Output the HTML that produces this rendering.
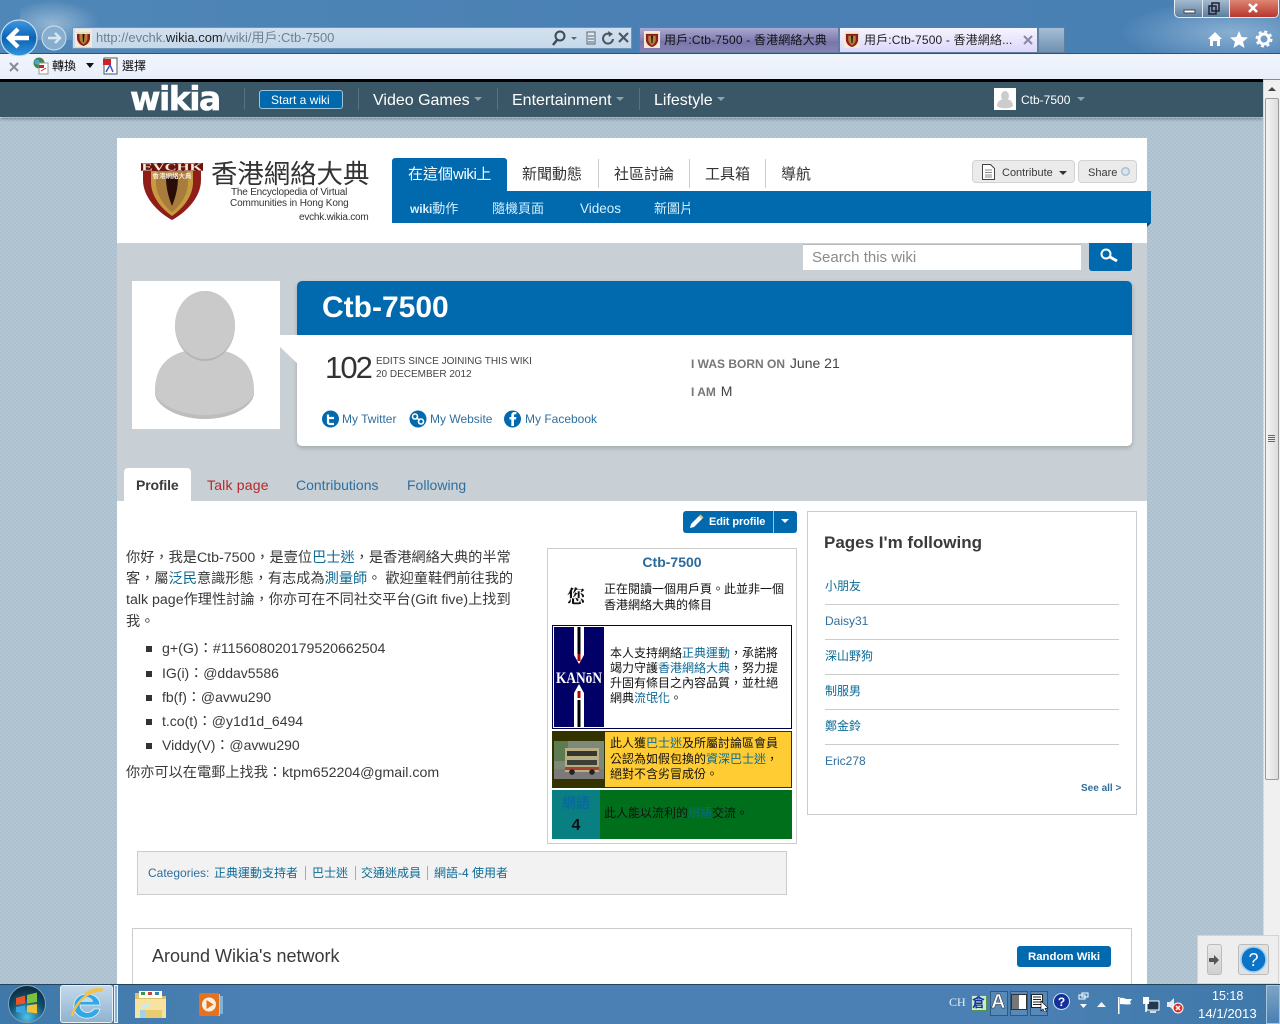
<!DOCTYPE html>
<html lang="zh-Hant"><head><meta charset="utf-8"><title>用戶:Ctb-7500</title>
<style>
html,body{margin:0;padding:0}
body{width:1280px;height:1024px;overflow:hidden;position:relative;background:#fff;font-family:"Liberation Sans","Noto Sans CJK TC",sans-serif;color:#3a3a3a}
.b,.t,svg{position:absolute}
.t{white-space:nowrap;line-height:20px;font-size:14px}
.a14{font-size:14.2px}
a{color:#0b6a96;text-decoration:none}
.s12{font-size:12px}.s13{font-size:13px}
.w{color:#fff}
.chk{background-color:#b6c7d4;background-image:linear-gradient(45deg,#acbfce 25%,transparent 25%,transparent 75%,#acbfce 75%),linear-gradient(45deg,#acbfce 25%,transparent 25%,transparent 75%,#acbfce 75%);background-size:4px 4px;background-position:0 0,2px 2px}
.sep{position:absolute;width:1px}
.li{position:absolute;left:146px;width:6px;height:6px;background:#333}
.hr{position:absolute;left:825px;width:294px;height:1px;background:#ccc}
</style></head><body>

<!-- page background -->
<div class="b chk" style="left:0;top:118px;width:1263px;height:866px"></div>

<!-- browser chrome -->
<div class="b" style="left:0;top:0;width:1280px;height:54px;background:linear-gradient(90deg,#4f87b8 0,#4a80b3 50%,#4980b4 100%)"></div>
<div class="b" style="left:20px;top:0;width:80px;height:40px;background:radial-gradient(ellipse at 40% 60%,rgba(255,255,255,.4),rgba(255,255,255,0) 70%)"></div>
<div class="b" style="left:1120px;top:0;width:160px;height:54px;background:radial-gradient(ellipse at 70% 60%,rgba(190,215,235,.55),rgba(255,255,255,0) 70%)"></div>
<div class="b" style="left:0;top:53px;width:1280px;height:1px;background:#2b5478"></div>
<!-- toolbar -->
<div class="b" style="left:0;top:54px;width:1280px;height:26px;background:linear-gradient(#f0f4fd,#e9effa)"></div>
<div class="b" style="left:0;top:79px;width:1263px;height:3px;background:#000"></div>
<div class="b" style="left:1263px;top:79px;width:17px;height:1px;background:#888"></div>

<!-- back / forward -->
<svg style="left:0;top:18px" width="72" height="38" viewBox="0 0 72 38">
<defs><linearGradient id="bk" x1="0" y1="0" x2="0" y2="1"><stop offset="0" stop-color="#3f9ae0"/><stop offset=".5" stop-color="#0b63b5"/><stop offset="1" stop-color="#2f97dc"/></linearGradient></defs>
<circle cx="54" cy="20" r="12" fill="#88aecf" stroke="#cfe0ef"/>
<path d="M48 20h11M55 15l5 5-5 5" fill="none" stroke="#d9e7f3" stroke-width="2.4"/>
<circle cx="19" cy="20" r="18" fill="url(#bk)" stroke="#c9dcee" stroke-width="1.2"/>
<path d="M10 20h19M18 11l-9 9 9 9" fill="none" stroke="#fff" stroke-width="4.4"/>
</svg>
<!-- address bar -->
<div class="b" style="left:72px;top:27px;width:560px;height:22px;background:linear-gradient(#d3e1ef,#c6d9ea);border:1px solid #6f95b7;box-sizing:border-box"></div>
<svg style="left:75px;top:29px" width="17" height="18" viewBox="0 0 17 18"><rect width="17" height="18" fill="#f4ead8"/><path d="M2 3h13v6c0 4-3 7-6.500 8C5 16 2 13 2 9z" fill="#8d1d18"/><path d="M4.500 5h8v4c0 3-2 5-4 6.500C6.500 14 4.500 12 4.500 9z" fill="#b0803c"/><path d="M7.500 5h2l-.5 8h-1z" fill="#2a0d08"/><rect x="1" y="3" width="15" height="2" fill="#e8dcc8"/></svg>
<div class="t s13" style="left:96px;top:28px;color:#6f7f8d;letter-spacing:-.02px">http://evchk.<span style="color:#222">wikia.com</span>/wiki/用戶:Ctb-7500</div>
<svg style="left:550px;top:29px" width="82" height="18" viewBox="0 0 82 18">
<circle cx="10" cy="7" r="4.500" fill="none" stroke="#3c4a55" stroke-width="2"/><path d="M7 11l-4 5" stroke="#3c4a55" stroke-width="2.400"/>
<path d="M21 8h6l-3 3z" fill="#5a6772"/>
<rect x="37" y="3" width="8" height="12" fill="#dfe8f0" stroke="#5a6772"/><path d="M38 7h6M38 10h6M38 13h6" stroke="#5a6772"/>
<path d="M60 5a5 5 0 1 0 3 5" fill="none" stroke="#4a5762" stroke-width="2"/><path d="M58 2l5 3-4 3z" fill="#4a5762"/>
<path d="M69 4l9 9M78 4l-9 9" stroke="#4a5762" stroke-width="2.200"/></svg>

<!-- tabs -->
<div class="b" style="left:639px;top:27px;width:200px;height:26px;background:linear-gradient(#a9a9d0,#7a76ab 60%,#8583b5);border:1px solid #5f7fa0;box-sizing:border-box"></div>
<div class="b" style="left:839px;top:27px;width:199px;height:26px;background:linear-gradient(#f6f4ff,#dcd6fa);border:1px solid #5f7fa0;box-sizing:border-box"></div>
<div class="b" style="left:1038px;top:27px;width:27px;height:26px;background:linear-gradient(#a6bfd6,#6d91b0);border:1px solid #5f7fa0;box-sizing:border-box"></div>
<svg style="left:644px;top:31px" width="16" height="17" viewBox="0 0 17 18"><rect width="17" height="18" fill="#f4ead8"/><path d="M2 3h13v6c0 4-3 7-6.500 8C5 16 2 13 2 9z" fill="#8d1d18"/><path d="M4.500 5h8v4c0 3-2 5-4 6.500C6.500 14 4.500 12 4.500 9z" fill="#b0803c"/><path d="M7.500 5h2l-.5 8h-1z" fill="#2a0d08"/></svg>
<svg style="left:844px;top:31px" width="16" height="17" viewBox="0 0 17 18"><rect width="17" height="18" fill="#f4ead8"/><path d="M2 3h13v6c0 4-3 7-6.500 8C5 16 2 13 2 9z" fill="#8d1d18"/><path d="M4.500 5h8v4c0 3-2 5-4 6.500C6.500 14 4.500 12 4.500 9z" fill="#b0803c"/><path d="M7.500 5h2l-.5 8h-1z" fill="#2a0d08"/></svg>
<div class="t s12" style="left:664px;top:30px;color:#111;letter-spacing:.18px">用戶:Ctb-7500 - 香港網絡大典</div>
<div class="t s12" style="left:864px;top:30px;color:#222;letter-spacing:.15px">用戶:Ctb-7500 - 香港網絡...</div>
<svg style="left:1023px;top:35px" width="10" height="10"><path d="M1 1l8 8M9 1l-8 8" stroke="#8a88a8" stroke-width="2"/></svg>

<!-- window controls -->
<div class="b" style="left:1174px;top:-2px;width:105px;height:20px;border:1px solid #e4edf5;border-radius:0 0 5px 5px;box-sizing:border-box;overflow:hidden;background:linear-gradient(#a9bed2,#5c7e9c)">
<div class="b" style="left:55px;top:0;width:49px;height:19px;background:linear-gradient(#e08a78,#b5322a)"></div>
<div class="b" style="left:27px;top:0;width:1px;height:19px;background:#dfe8f0"></div>
<div class="b" style="left:54px;top:0;width:1px;height:19px;background:#dfe8f0"></div>
</div>
<svg style="left:1174px;top:0" width="105" height="18"><rect x="10" y="10" width="11" height="3" fill="#fff" stroke="#445"/><rect x="35" y="6" width="7" height="8" fill="none" stroke="#223" stroke-width="1.500"/><rect x="38" y="3" width="7" height="8" fill="none" stroke="#223" stroke-width="1.500"/><path d="M75 4l8 8M83 4l-8 8" stroke="#fff" stroke-width="2.600"/></svg>
<!-- right icons -->
<svg style="left:1205px;top:29px" width="72" height="20" viewBox="0 0 72 20">
<path d="M3 10l7-7 7 7h-2v7h-3v-5H8v5H5v-7z" fill="#fff"/>
<path d="M34 2l2.500 6 6.500.5-5 4.200 1.600 6.300-5.600-3.500-5.600 3.500 1.600-6.300-5-4.200 6.500-.5z" fill="#fff"/>
<circle cx="59" cy="10" r="5" fill="none" stroke="#fff" stroke-width="3"/><circle cx="59" cy="10" r="7.500" fill="none" stroke="#fff" stroke-width="2" stroke-dasharray="3 2.900"/></svg>

<!-- toolbar items -->
<svg style="left:9px;top:62px" width="11" height="11"><path d="M1 1l8 8M9 1l-8 8" stroke="#889" stroke-width="2"/></svg>
<svg style="left:32px;top:57px" width="18" height="18"><circle cx="7" cy="6" r="5.500" fill="#3c8c46"/><circle cx="5" cy="5" r="2.500" fill="#4aa2d8"/><rect x="7" y="6" width="9" height="11" fill="#fff" stroke="#999"/><rect x="7" y="8" width="5" height="3" fill="#c22"/><path d="M9 14l5-3" stroke="#c22"/></svg>
<div class="t s12" style="left:52px;top:56px;color:#111">轉換</div>
<svg style="left:86px;top:63px" width="9" height="6"><path d="M0 0h8l-4 5z" fill="#111"/></svg>
<svg style="left:102px;top:57px" width="17" height="18"><rect x="2" y="1" width="13" height="16" fill="#fff" stroke="#555"/><rect x="1" y="2" width="8" height="6" fill="#c22"/><path d="M4 15l4-7 3 7" fill="none" stroke="#35c" stroke-width="1.500"/></svg>
<div class="t s12" style="left:122px;top:56px;color:#111">選擇</div>

<!-- wikia bar -->
<div class="b" style="left:0;top:82px;width:1263px;height:35px;background:#3a5767;box-shadow:0 2px 3px rgba(30,50,70,.45)"></div>
<div class="t w" style="left:130px;top:82px;font:900 33px/34px 'DejaVu Sans',sans-serif;letter-spacing:-1.500px;-webkit-text-stroke:.6px #fff">wikia</div>
<div class="sep" style="left:244px;top:88px;height:22px;background:#59727f"></div>
<div class="b" style="left:259px;top:90px;width:84px;height:19px;background:#0069ad;border:1px solid #9cc3dc;border-radius:3px;box-sizing:border-box"></div>
<div class="t s12 w" style="left:271px;top:90px">Start a wiki</div>
<div class="sep" style="left:358px;top:88px;height:22px;background:#59727f"></div>
<div class="t w" style="left:373px;top:91px;font-size:16px">Video Games</div>
<svg style="left:474px;top:97px" width="9" height="5"><path d="M0 0h8l-4 4z" fill="#8fa3ae"/></svg>
<div class="sep" style="left:497px;top:88px;height:22px;background:#59727f"></div>
<div class="t w" style="left:512px;top:91px;font-size:16px">Entertainment</div>
<svg style="left:616px;top:97px" width="9" height="5"><path d="M0 0h8l-4 4z" fill="#8fa3ae"/></svg>
<div class="sep" style="left:639px;top:88px;height:22px;background:#59727f"></div>
<div class="t w" style="left:654px;top:91px;font-size:16px">Lifestyle</div>
<svg style="left:717px;top:97px" width="9" height="5"><path d="M0 0h8l-4 4z" fill="#8fa3ae"/></svg>
<svg style="left:994px;top:88px" width="22" height="22"><rect width="22" height="22" fill="#fff"/><ellipse cx="11" cy="8" rx="4" ry="5" fill="#ccc"/><path d="M3 18c0-5 4-7 8-7s8 2 8 7c-2 3-14 3-16 0z" fill="#ccc"/></svg>
<div class="t s12 w" style="left:1021px;top:90px">Ctb-7500</div>
<svg style="left:1077px;top:97px" width="9" height="5"><path d="M0 0h8l-4 4z" fill="#8fa3ae"/></svg>

<!-- scrollbar -->
<div class="b" style="left:1263px;top:80px;width:17px;height:904px;background:#f0f0f0;border-left:1px solid #d8d8d8;box-sizing:border-box"></div>
<svg style="left:1268px;top:87px" width="8" height="5"><path d="M4 0l4 4H0z" fill="#444"/></svg>
<div class="b" style="left:1265px;top:98px;width:14px;height:682px;background:linear-gradient(90deg,#f4f4f4,#dcdcdc);border:1px solid #9a9a9a;border-radius:2px;box-sizing:border-box"></div>
<div class="b" style="left:1268px;top:435px;width:7px;height:7px;background:repeating-linear-gradient(#666 0 1px,transparent 1px 2px)"></div>

<!-- wiki container -->
<div class="b" style="left:117px;top:138px;width:1030px;height:105px;background:#fff"></div>
<div class="b" style="left:117px;top:243px;width:1030px;height:258px;background:#c8d0d5"></div>
<div class="b" style="left:117px;top:501px;width:1030px;height:483px;background:#fff"></div>

<!-- logo -->
<svg style="left:141px;top:158px" width="62" height="63" viewBox="0 0 62 63">
<path d="M2 6h58v16c0 18-16 33-29 40C18 55 2 40 2 22z" fill="#8f1d1a"/>
<path d="M10 6h42v18c0 15-11 27-21 34C21 51 10 39 10 24z" fill="#c79a3f"/>
<path d="M15 6h32v18c0 13-8 24-16 30C23 48 15 37 15 24z" fill="#a87c3c"/>
<path d="M25 18h12c0 14-3 22-6 30-3-8-6-16-6-30z" fill="#2a0c08"/>
<rect x="0" y="5" width="62" height="8" fill="#6c1310"/>
<text x="31" y="12.500" text-anchor="middle" font-family="Liberation Serif" font-weight="700" font-size="10" fill="#f5ead8" textLength="61" lengthAdjust="spacingAndGlyphs">EVCHK</text>
<text x="31" y="20" text-anchor="middle" font-family="Noto Sans CJK TC" font-weight="700" font-size="6.500" fill="#f5ead8">香港網絡大典</text>
</svg>
<div class="t" style="left:211px;top:159px;font-size:26.400px;line-height:30px;color:#333">香港網絡大典</div>
<div class="t" style="left:231px;top:183px;font-size:10px;color:#333;letter-spacing:-.2px">The Encyclopedia of Virtual</div>
<div class="t" style="left:230px;top:194px;font-size:10px;color:#333;letter-spacing:-.13px">Communities in Hong Kong</div>
<div class="t" style="left:299px;top:208px;font-size:10px;color:#333;letter-spacing:-.22px">evchk.wikia.com</div>

<!-- nav -->
<div class="b" style="left:392px;top:158px;width:115px;height:34px;background:#0169ad;border-radius:3px 3px 0 0"></div>
<div class="b" style="left:392px;top:191px;width:759px;height:32px;background:#0169ad"></div>
<svg style="left:1147px;top:223px" width="4" height="4"><path d="M0 0h4L0 4z" fill="#024a7a"/></svg>
<div class="t w" style="left:408px;top:165px;font-size:15px"><span>在這個</span><span style="letter-spacing:-.4px">wiki</span><span>上</span></div>
<div class="t" style="left:522px;top:165px;font-size:15px;color:#333">新聞動態</div>
<div class="sep" style="left:598px;top:159px;height:29px;background:#ccc"></div>
<div class="t" style="left:614px;top:165px;font-size:15px;color:#333">社區討論</div>
<div class="sep" style="left:689px;top:159px;height:29px;background:#ccc"></div>
<div class="t" style="left:705px;top:165px;font-size:15px;color:#333">工具箱</div>
<div class="sep" style="left:765px;top:159px;height:29px;background:#ccc"></div>
<div class="t" style="left:781px;top:165px;font-size:15px;color:#333">導航</div>
<div class="t s13" style="left:410px;top:199px;color:#d6f0ff"><span style="font-size:12px;font-weight:700;letter-spacing:-.1px">wiki</span>動作</div>
<div class="t s13" style="left:492px;top:199px;color:#d6f0ff">隨機頁面</div>
<div class="t" style="left:580px;top:199px;font-size:13.500px;color:#d6f0ff">Videos</div>
<div class="t s13" style="left:654px;top:199px;color:#d6f0ff">新圖片</div>

<!-- contribute / share -->
<div class="b" style="left:972px;top:160px;width:103px;height:23px;background:#ebebeb;border:1px solid #d2d2d2;border-radius:4px;box-sizing:border-box"></div>
<svg style="left:981px;top:164px" width="15" height="16"><path d="M1.500 .5h8l4 4v11h-12z" fill="#fff" stroke="#444"/><path d="M4 6h7M4 8.500h7M4 11h7M4 13h7" stroke="#888"/></svg>
<div class="t" style="left:1002px;top:163px;font-size:11px;color:#3a3a3a">Contribute</div>
<svg style="left:1059px;top:171px" width="9" height="5"><path d="M0 0h8l-4 4z" fill="#333"/></svg>
<div class="b" style="left:1078px;top:160px;width:59px;height:23px;background:#ebebeb;border:1px solid #d2d2d2;border-radius:4px;box-sizing:border-box"></div>
<div class="t" style="left:1088px;top:163px;font-size:11px;color:#3a3a3a">Share</div>
<svg style="left:1120px;top:166px" width="11" height="11"><circle cx="5.500" cy="5.500" r="3.800" fill="#dce4ea" stroke="#a9c0d2" stroke-width="1.500"/></svg>

<!-- search -->
<div class="b" style="left:803px;top:244px;width:278px;height:26px;background:#fff;border-top:1px solid #bbb;box-sizing:border-box"></div>
<div class="t" style="left:812px;top:248px;color:#8a8a8a;font-size:15px">Search this wiki</div>
<div class="b" style="left:1089px;top:243px;width:43px;height:28px;background:#0169ad;border-radius:0 0 3px 3px"></div>
<svg style="left:1099px;top:247px" width="22" height="18"><circle cx="7" cy="7" r="4.500" fill="none" stroke="#fff" stroke-width="2"/><path d="M11 10l7 4" stroke="#fff" stroke-width="3"/></svg>

<!-- avatar -->
<div class="b" style="left:132px;top:281px;width:148px;height:148px;background:#fff"></div>
<svg style="left:132px;top:281px" width="148" height="148" viewBox="0 0 148 148">
<path d="M23 112c0-36 25-44 50-44s49 8 49 44c0 12-20 26-49 26S23 124 23 112z" fill="#bdbdbd"/>
<path d="M23 110c0-34 25-42 50-42s49 8 49 42c0 11-20 24-49 24S23 121 23 110z" fill="#cacaca"/>
<ellipse cx="73" cy="45" rx="30" ry="35" fill="#b4b4b4"/>
<ellipse cx="73" cy="44" rx="30" ry="34" fill="#cacaca"/>
</svg>

<!-- masthead -->
<div class="b" style="left:297px;top:281px;width:835px;height:165px;background:#fff;border-radius:5px;box-shadow:0 2px 5px rgba(0,0,0,.2)"></div>
<div class="b" style="left:297px;top:281px;width:835px;height:54px;background:#0169ad;border-radius:5px 5px 0 0"></div>
<svg style="left:280px;top:335px" width="18" height="29"><path d="M0 0h18v29L0 12z" fill="#fff"/></svg>
<div class="t w" style="left:322px;top:290px;font-size:30px;font-weight:700;line-height:35px">Ctb-7500</div>
<div class="t" style="left:325px;top:349px;font-size:31px;line-height:37px;letter-spacing:-1.900px;color:#333">102</div>
<div class="t" style="left:376px;top:352px;font-size:10px;color:#444">EDITS SINCE JOINING THIS WIKI</div>
<div class="t" style="left:376px;top:365px;font-size:10px;color:#444">20 DECEMBER 2012</div>
<div class="t" style="left:691px;top:353px;color:#444"><span style="font-size:12px;font-weight:700;color:#777;margin-right:1px">I WAS BORN ON</span> June 21</div>
<div class="t" style="left:691px;top:381px;color:#444"><span style="font-size:12px;font-weight:700;color:#777;margin-right:1px">I AM</span> M</div>
<svg style="left:321px;top:410px" width="200" height="18" viewBox="0 0 200 18">
<circle cx="9.500" cy="9" r="8.500" fill="#0169ad"/><path d="M7 4.500v8c0 1 1 1.500 2 1.500h4M7 8h6" fill="none" stroke="#fff" stroke-width="2.200"/>
<circle cx="97" cy="9" r="8.500" fill="#0169ad"/><circle cx="94" cy="6.500" r="2.500" fill="none" stroke="#fff" stroke-width="1.600"/><circle cx="100" cy="11.500" r="2.500" fill="none" stroke="#fff" stroke-width="1.600"/><path d="M95 8l4 2" stroke="#fff" stroke-width="1.600"/>
<circle cx="191.500" cy="9" r="8.500" fill="#0169ad"/><path d="M193 16V9.500h2l.4-2.500H193V5.500c0-.8.300-1.200 1.200-1.200h1.200V2h-1.800c-2.200 0-3.300 1.300-3.300 3.200V7h-1.800v2.500h1.800V16z" fill="#fff"/>
</svg>
<div class="t s12" style="left:342px;top:409px;color:#2f6f9f">My Twitter</div>
<div class="t s12" style="left:430px;top:409px;color:#2f6f9f">My Website</div>
<div class="t s12" style="left:525px;top:409px;color:#2f6f9f">My Facebook</div>

<!-- profile tabs -->
<div class="b" style="left:124px;top:468px;width:67px;height:33px;background:#fff;border-radius:4px 4px 0 0"></div>
<div class="t" style="left:136px;top:475px;font-weight:700;color:#3a3a3a;letter-spacing:-.15px">Profile</div>
<div class="t" style="left:207px;top:475px;color:#b3282d;letter-spacing:.2px">Talk page</div>
<div class="t" style="left:296px;top:475px;color:#2f6f9f">Contributions</div>
<div class="t" style="left:407px;top:475px;color:#2f6f9f">Following</div>

<!-- edit profile -->
<div class="b" style="left:683px;top:511px;width:114px;height:22px;background:#0169ad;border-radius:3px"></div>
<div class="b" style="left:773px;top:511px;width:1px;height:22px;background:#9cc3dc"></div>
<svg style="left:689px;top:514px" width="16" height="15"><path d="M1 14l1-4 8-8 3 3-8 8z" fill="#fff"/><path d="M10 2l3 3 1.500-1.500-3-3z" fill="#f2c94c"/></svg>
<div class="t w" style="left:709px;top:512px;font-weight:700;font-size:11px;letter-spacing:-.1px">Edit profile</div>
<svg style="left:781px;top:519px" width="9" height="5"><path d="M0 0h8l-4 4z" fill="#fff"/></svg>

<!-- article text -->
<div class="t a14" style="left:126px;top:548px">你好，我是Ctb-7500，是壹位<a>巴士迷</a>，是香港網絡大典的半常</div>
<div class="t a14" style="left:126px;top:569px">客，屬<a>泛民</a>意識形態，有志成為<a>測量師</a>。 歡迎童鞋們前往我的</div>
<div class="t a14" style="left:126px;top:590px">talk page作理性討論，你亦可在不同社交平台(Gift five)上找到</div>
<div class="t a14" style="left:126px;top:612px">我。</div>
<div class="li" style="top:646px"></div><div class="t a14" style="left:162px;top:639px">g+(G)：#115608020179520662504</div>
<div class="li" style="top:671px"></div><div class="t" style="left:162px;top:663px">IG(i)：@ddav5586</div>
<div class="li" style="top:695px"></div><div class="t" style="left:162px;top:687px">fb(f)：@avwu290</div>
<div class="li" style="top:719px"></div><div class="t" style="left:162px;top:711px">t.co(t)：@y1d1d_6494</div>
<div class="li" style="top:743px"></div><div class="t" style="left:162px;top:735px">Viddy(V)：@avwu290</div>
<div class="t a14" style="left:126px;top:763px">你亦可以在電郵上找我：ktpm652204@gmail.com</div>

<!-- infobox -->
<div class="b" style="left:547px;top:548px;width:250px;height:296px;border:1px solid #ccc;box-sizing:border-box;background:#fff"></div>
<div class="t" style="left:547px;width:250px;top:552px;text-align:center;font-weight:700;color:#2b6a9a">Ctb-7500</div>
<div class="t" style="left:567px;top:587px;font-size:18px;font-weight:700;color:#111;font-family:'Liberation Serif','Noto Serif CJK SC',serif">您</div>
<div class="t s12" style="left:604px;top:579px;color:#111">正在閱讀一個用戶頁。此並非一個</div>
<div class="t s12" style="left:604px;top:595px;color:#111">香港網絡大典的條目</div>

<div class="b" style="left:552px;top:625px;width:240px;height:104px;border:1px solid #000050;box-sizing:border-box;background:#fff"></div>
<div class="b" style="left:554px;top:627px;width:50px;height:100px;background:#000066"></div>
<svg style="left:554px;top:627px" width="50" height="100" viewBox="0 0 50 100">
<path d="M20 0h10v28l-5 9-5-9zM20 100h10V66l-5-9-5 9z" fill="#fff"/>
<rect x="23.500" y="0" width="3" height="27" fill="#000"/><rect x="23.500" y="73" width="3" height="27" fill="#000"/>
<rect x="23.500" y="27" width="3" height="7" fill="#b00"/><rect x="23.500" y="64" width="3" height="7" fill="#b00"/>
<text x="25" y="56" text-anchor="middle" font-family="Liberation Serif" font-weight="700" font-size="16" fill="#fff" textLength="46" lengthAdjust="spacingAndGlyphs">KANōN</text>
</svg>
<div class="t s12" style="left:610px;top:643px;color:#111">本人支持網絡<a>正典運動</a>，承諾將</div>
<div class="t s12" style="left:610px;top:658px;color:#111">竭力守護<a>香港網絡大典</a>，努力提</div>
<div class="t s12" style="left:610px;top:673px;color:#111">升固有條目之內容品質，並杜絕</div>
<div class="t s12" style="left:610px;top:688px;color:#111">網典<a>流氓化</a>。</div>

<div class="b" style="left:552px;top:731px;width:240px;height:57px;background:#333300"></div>
<div class="b" style="left:605px;top:732px;width:186px;height:55px;background:#ffcc33"></div>
<svg style="left:554px;top:741px" width="50" height="38" viewBox="0 0 50 38">
<rect width="50" height="38" fill="#7d8a78"/><rect y="28" width="50" height="10" fill="#7c7a78"/><rect x="0" y="0" width="14" height="20" fill="#5d7a50"/>
<rect x="11" y="7" width="34" height="24" fill="#b9ad84"/><rect x="13" y="10" width="30" height="5" fill="#33362f"/><rect x="13" y="19" width="30" height="5" fill="#3d4038"/><rect x="11" y="26" width="34" height="3" fill="#a4432c"/>
<circle cx="18" cy="31" r="2.800" fill="#222"/><circle cx="38" cy="31" r="2.800" fill="#222"/></svg>
<div class="t s12" style="left:610px;top:733px;color:#111">此人獲<a>巴士迷</a>及所屬討論區會員</div>
<div class="t s12" style="left:610px;top:749px;color:#111">公認為如假包換的<a>資深巴士迷</a>，</div>
<div class="t s12" style="left:610px;top:764px;color:#111">絕對不含劣冒成份。</div>

<div class="b" style="left:552px;top:790px;width:240px;height:49px;background:#006f1c"></div>
<div class="b" style="left:552px;top:790px;width:48px;height:49px;background:#0a7f82"></div>
<div class="t" style="left:552px;width:48px;top:793px;text-align:center;font-weight:700;color:#086a9a;font-size:14px">網語</div>
<div class="t" style="left:552px;width:48px;top:816px;text-align:center;font-weight:700;color:#111;font-size:16px">4</div>
<div class="t s12" style="left:604px;top:803px;color:#111">此人能以流利的<span style="color:#0a6a8a">網語</span>交流。</div>

<!-- following box -->
<div class="b" style="left:807px;top:511px;width:330px;height:304px;border:1px solid #ccc;box-sizing:border-box"></div>
<div class="t" style="left:824px;top:533px;font-size:17px;font-weight:700;color:#3a3a3a">Pages I'm following</div>
<a class="t s12" style="left:825px;top:576px">小朋友</a>
<div class="hr" style="top:604px"></div>
<a class="t s12" style="left:825px;top:611px;color:#2f6f9f">Daisy31</a>
<div class="hr" style="top:639px"></div>
<a class="t s12" style="left:825px;top:646px">深山野狗</a>
<div class="hr" style="top:674px"></div>
<a class="t s12" style="left:825px;top:681px">制服男</a>
<div class="hr" style="top:709px"></div>
<a class="t s12" style="left:825px;top:716px">鄭金鈴</a>
<div class="hr" style="top:744px"></div>
<a class="t s12" style="left:825px;top:751px;color:#2f6f9f">Eric278</a>
<div class="t" style="left:1081px;top:779px;font-size:10px;font-weight:700;color:#2f6f9f">See all &gt;</div>

<!-- categories -->
<div class="b" style="left:137px;top:851px;width:650px;height:44px;background:#f2f2f2;border:1px solid #ccc;box-sizing:border-box"></div>
<div class="t s12" style="left:148px;top:863px;color:#2f6f9f">Categories:</div>
<a class="t s12" style="left:214px;top:863px">正典運動支持者</a>
<div class="sep" style="left:305px;top:866px;height:14px;background:#aaa"></div>
<a class="t s12" style="left:312px;top:863px">巴士迷</a>
<div class="sep" style="left:355px;top:866px;height:14px;background:#aaa"></div>
<a class="t s12" style="left:361px;top:863px">交通迷成員</a>
<div class="sep" style="left:427px;top:866px;height:14px;background:#aaa"></div>
<a class="t s12" style="left:434px;top:863px">網語-4 使用者</a>

<!-- network -->
<div class="b" style="left:132px;top:928px;width:1000px;height:60px;border:1px solid #ccc;box-sizing:border-box;background:#fff"></div>
<div class="t" style="left:152px;top:946px;font-size:18px;color:#3a3a3a">Around Wikia's network</div>
<div class="b" style="left:1017px;top:946px;width:94px;height:21px;background:#0169ad;border-radius:3px"></div>
<div class="t w" style="left:1028px;top:947px;font-weight:700;font-size:11.400px">Random Wiki</div>

<!-- help overlay -->
<div class="b" style="left:1197px;top:935px;width:82px;height:49px;background:#eeeeee;border:1px solid #d4d4d4;box-sizing:border-box"></div>
<div class="b" style="left:1207px;top:944px;width:15px;height:31px;background:linear-gradient(#e8e8e8,#d0d0d0);border:1px solid #bbb;border-radius:3px;box-sizing:border-box"></div>
<svg style="left:1209px;top:955px" width="11" height="10"><path d="M0 3h5V0l5 5-5 5V7H0z" fill="#555"/></svg>
<div class="b" style="left:1238px;top:944px;width:31px;height:31px;background:#e2e2e2;border:1px solid #bbb;border-radius:3px;box-sizing:border-box"></div>
<svg style="left:1240px;top:946px" width="27" height="27"><circle cx="13.500" cy="13.500" r="12.500" fill="#0b74c8" stroke="#9fd0f0" stroke-width="1.500"/><text x="13.500" y="20" text-anchor="middle" font-family="Liberation Sans" font-size="18" fill="#fff">?</text></svg>

<!-- taskbar -->
<div class="b" style="left:0;top:984px;width:1280px;height:40px;background:linear-gradient(90deg,#3f78aa,#4a80b3 20%,#4a80b3 80%,#3f78aa);border-top:1px solid #23445f;box-sizing:border-box"></div>
<svg style="left:7px;top:985px" width="40" height="39" viewBox="0 0 40 39">
<defs><radialGradient id="o" cx=".5" cy=".85" r=".8"><stop offset="0" stop-color="#4fc2e8"/><stop offset=".6" stop-color="#12506e"/><stop offset="1" stop-color="#0c2c40"/></radialGradient></defs>
<circle cx="20" cy="19" r="18.500" fill="url(#o)" stroke="#7fa3bd"/>
<path d="M9 13l9-2.500v8L9 20z" fill="#e8552a"/><path d="M20 10l10-2.500v9.500l-10 1.500z" fill="#7fbf3f"/><path d="M9 22l9-1.500v8L9 27z" fill="#3aa5e0"/><path d="M20 20.500l10-1.500v9.500l-10-1.500z" fill="#f3c233"/>
</svg>
<div class="b" style="left:60px;top:985px;width:53px;height:38px;background:linear-gradient(#c4d9ea,#8fb3d0);border:1px solid #e8f0f7;border-radius:3px;box-sizing:border-box"></div>
<div class="b" style="left:114px;top:985px;width:4px;height:38px;background:#8fb3d0;border:1px solid #e8f0f7;box-sizing:border-box"></div>
<svg style="left:69px;top:987px" width="36" height="34" viewBox="0 0 36 34">
<path d="M5 18a13 11 0 0 1 26 0H11a7.500 7 0 0 0 14 4h6a13 11 0 0 1-26-4z" fill="#2ea8e8" stroke="#e9f4fb" stroke-width=".8"/><path d="M12 15h12a6 5 0 0 0-12 0z" fill="#c4d9ea"/>
<path d="M3 29C8 12 22 3 34 3c-6-2-12 0-18 4" fill="none" stroke="#f2c24a" stroke-width="2.400"/></svg>
<svg style="left:134px;top:990px" width="34" height="30" viewBox="0 0 34 30">
<path d="M1 3h12l2 3h17v22H1z" fill="#dcc06c"/><rect x="5" y="1" width="23" height="7" fill="#fff"/><rect x="7" y="2" width="4" height="3" fill="#3a9a3a"/><rect x="14" y="2" width="4" height="3" fill="#c43"/><rect x="21" y="2" width="4" height="3" fill="#38a"/>
<path d="M1 9h31v19H1z" fill="#f6e3a0"/><path d="M5 18h9l2-4h-4z" fill="#c9e7f5"/><path d="M6 20h22v8H6z" fill="#e9cc72"/><path d="M6 20h5v8H6z" fill="#9ed2ea"/></svg>
<svg style="left:198px;top:992px" width="27" height="26" viewBox="0 0 27 26">
<rect x="19" y="4" width="6" height="18" fill="#7eb3d8"/><rect x="14" y="2" width="8" height="22" fill="#a6d0ea"/><rect x="1" y="1" width="20" height="23" rx="2" fill="#e8721c"/><circle cx="11" cy="12.500" r="7" fill="#f7f0e0"/><path d="M8.500 8l7 4.500-7 4.500z" fill="#e8721c"/></svg>

<div class="t s12 w" style="left:949px;top:992px;font-family:'Liberation Serif',serif;color:#e8f0f7">CH</div>
<div class="b" style="left:990px;top:991px;width:18px;height:25px;background:rgba(255,255,255,.08);border:1px solid #2d5a80;box-sizing:border-box"></div>
<div class="b" style="left:1010px;top:991px;width:18px;height:25px;background:rgba(255,255,255,.08);border:1px solid #2d5a80;box-sizing:border-box"></div>
<div class="b" style="left:1030px;top:991px;width:18px;height:25px;background:rgba(255,255,255,.08);border:1px solid #2d5a80;box-sizing:border-box"></div>
<div class="b" style="left:971px;top:995px;width:16px;height:16px;background:#cfe8cf;border:1px solid #4a9a4a;box-sizing:border-box"></div>
<div class="t" style="left:972px;top:993px;font-size:13px;color:#13359c;font-weight:700">倉</div>
<div class="t w" style="left:991px;top:992px;font-size:20px;line-height:21px;font-weight:700;-webkit-text-stroke:.4px #111">A</div>
<svg style="left:1011px;top:994px" width="16" height="16"><rect x=".5" y=".5" width="15" height="15" fill="#fff" stroke="#333"/><rect x="1" y="1" width="7" height="14" fill="#777"/></svg>
<svg style="left:1031px;top:994px" width="18" height="18"><rect x=".5" y=".5" width="11" height="13" fill="#fff" stroke="#222"/><path d="M2 3h8M2 5.500h8M2 8h8M2 10.500h8" stroke="#222"/><path d="M10 7l7 7-3 .5 1.500 3-2 .5-1.500-3-2 2z" fill="#fff" stroke="#000" stroke-width=".6"/></svg>
<svg style="left:1053px;top:993px" width="17" height="17"><circle cx="8.500" cy="8.500" r="8" fill="#132f9a" stroke="#cfe0ef"/><text x="8.500" y="13" text-anchor="middle" font-family="Liberation Sans" font-weight="700" font-size="12" fill="#fff">?</text></svg>
<svg style="left:1078px;top:992px" width="12" height="20"><rect x="1" y="3" width="6" height="4" fill="none" stroke="#fff"/><rect x="4" y="1" width="6" height="4" fill="none" stroke="#fff"/><path d="M2 12h7l-3.500 4z" fill="#fff"/></svg>
<svg style="left:1097px;top:1002px" width="9" height="6"><path d="M4.500 0L9 5H0z" fill="#eef4f9"/></svg>
<svg style="left:1117px;top:996px" width="18" height="19"><rect x="1" y="1" width="1.500" height="17" fill="#fff"/><path d="M3 2c3-1 5 1 7 1l5 0-2 3 1 2c-3 1-8 0-11 0z" fill="#fff"/></svg>
<svg style="left:1142px;top:996px" width="18" height="18"><rect x="5" y="5" width="12" height="9" fill="#1f3a52" stroke="#fff"/><rect x="1" y="1" width="6" height="7" fill="#fff"/><path d="M4 8v8M8 16h6" stroke="#fff" stroke-width="1.500"/></svg>
<svg style="left:1166px;top:996px" width="18" height="18"><path d="M1 6h3l4-4v13l-4-4H1z" fill="#e4ecf3"/><circle cx="12" cy="12" r="5" fill="#d9342b" stroke="#fff"/><path d="M10 10l4 4M14 10l-4 4" stroke="#fff" stroke-width="1.400"/></svg>
<div class="t" style="left:1212px;top:986px;font-size:12.500px;color:#fff">15:18</div>
<div class="t" style="left:1198px;top:1004px;font-size:13.200px;color:#fff">14/1/2013</div>
<div class="b" style="left:1266px;top:985px;width:14px;height:39px;background:linear-gradient(#7ea4c4,#4a80b3);border:1px solid #a6c3db;box-sizing:border-box"></div>
</body></html>
